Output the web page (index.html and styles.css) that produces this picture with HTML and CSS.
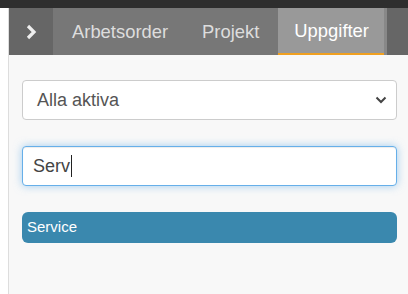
FILE: index.html
```html
<!DOCTYPE html>
<html lang="sv">
<head>
    <meta charset="UTF-8">
    <meta name="viewport" content="width=device-width, initial-scale=1.0">
    <title>Uppgifter</title>
    <link rel="stylesheet" href="styles.css">
</head>
<body>
    <div class="topbar"></div>
    <div class="layout">
        <div class="side"></div>
        <div class="main">
            <div class="tabs">
                <div class="toggle">
                    <svg width="12" height="16" viewBox="0 0 12 16">
                        <path d="M3 2 L9 8 L3 14" fill="none" stroke="#eee" stroke-width="3.2"/>
                    </svg>
                </div>
                <div class="tab first">Arbetsorder</div>
                <div class="tab">Projekt</div>
                <div class="tab active">Uppgifter</div>
                <div class="tab-edge"></div>
            </div>
            <div class="content">
                <div class="field select">
                    <span>Alla aktiva</span>
                    <svg width="12" height="8" viewBox="0 0 12 8">
                        <path d="M1.5 1.5 L6 6 L10.5 1.5" fill="none" stroke="#444" stroke-width="2"/>
                    </svg>
                </div>
                <div class="field search">
                    <span>Serv</span><span class="caret"></span>
                </div>
                <div class="result">Service</div>
            </div>
        </div>
    </div>
</body>
</html>
```

FILE: styles.css
```css
body {
    margin: 0;
    font-family: "Liberation Sans", Arial, sans-serif;
    background: #fff;
    height: 294px;
    overflow: hidden;
}
.topbar {
    height: 8px;
    background: #2e2e2e;
    box-shadow: 0 1px 2px rgba(0,0,0,0.3);
}
.layout {
    display: flex;
    height: 286px;
}
.side {
    width: 8px;
    border-right: 1px solid #ddd;
    background: #fff;
}
.main {
    flex: 1;
    background: #f8f8f8;
}
.tabs {
    display: flex;
    height: 47px;
    background: #777;
}
.toggle {
    width: 44px;
    background: #666;
    display: flex;
    align-items: center;
    justify-content: center;
}
.tab {
    padding: 0 19px 0 17px;
    line-height: 47px;
    font-size: 18.4px;
    color: #ddd;
    white-space: nowrap;
}
.tab.first {
    padding: 0 17px 0 19px;
}
.tab.active {
    width: 106px;
    box-sizing: border-box;
    padding: 0 0 0 16px;
    background: #999;
    color: #fff;
    border-bottom: 2px solid #f0a020;
    line-height: 45px;
}
.tab-edge {
    width: 3px;
    background: #888;
}
.tabs::after {
    content: "";
    flex: 1;
    background: #666;
}
.content {
    padding: 25px 11px 0 13px;
}
.field {
    height: 40px;
    box-sizing: border-box;
    background: #fff;
    border: 1px solid #ccc;
    border-radius: 4px;
    display: flex;
    align-items: center;
    font-size: 18px;
    color: #555;
    margin-bottom: 26px;
}
.select {
    padding: 0 9px 0 14px;
    justify-content: space-between;
}
.search {
    padding-left: 10px;
    border-color: #66afe9;
    box-shadow: inset 0 1px 1px rgba(0,0,0,0.075), 0 0 8px rgba(102,175,233,0.6);
    color: #444;
}
.caret {
    width: 1px;
    height: 22px;
    background: #222;
    margin-left: 1px;
}
.result {
    height: 31px;
    line-height: 29px;
    background: #3a88ae;
    border-radius: 6px;
    padding-left: 5px;
    font-size: 15px;
    color: #fff;
}
```
